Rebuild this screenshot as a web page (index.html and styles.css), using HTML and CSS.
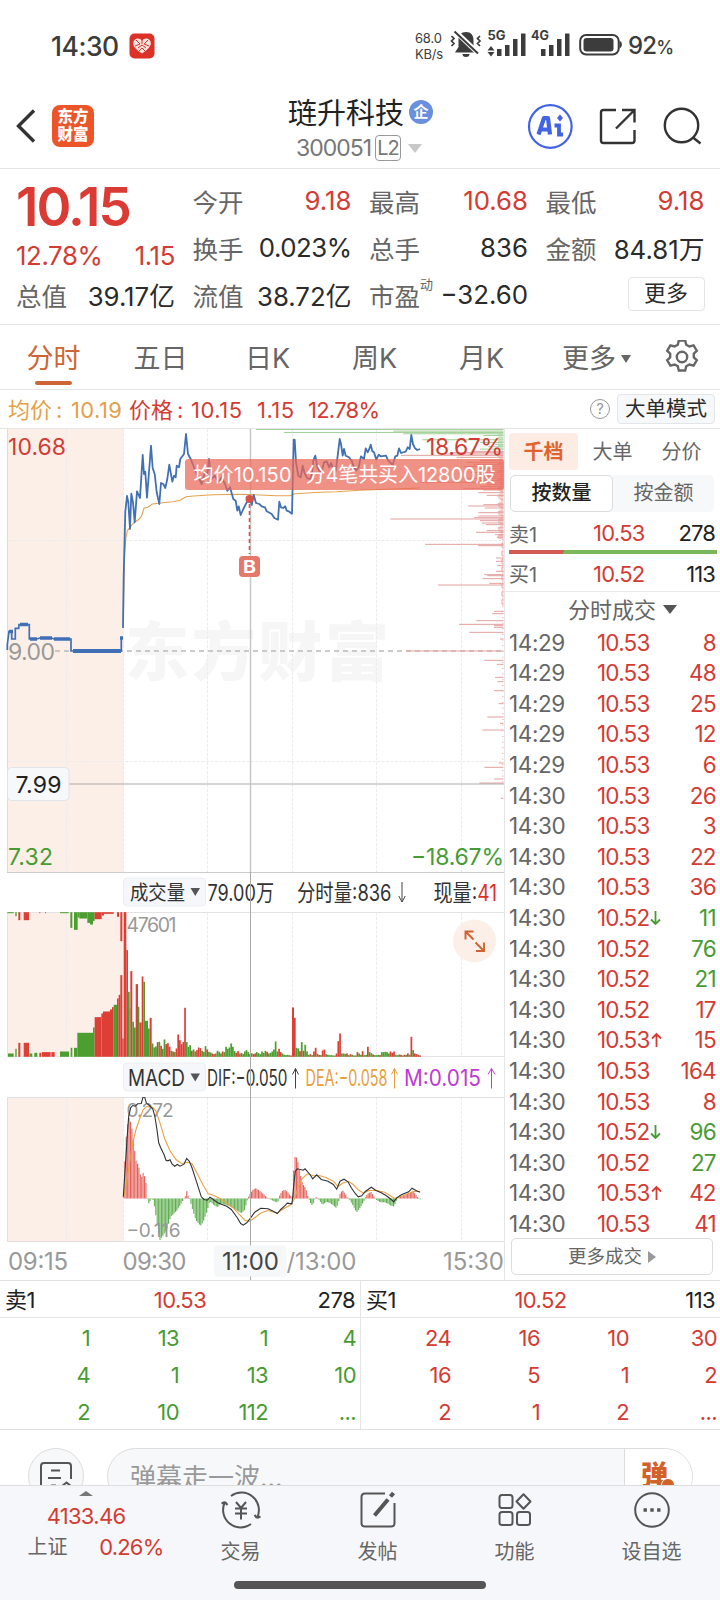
FILE: index.html
```html
<!DOCTYPE html>
<html lang="zh-CN">
<head>
<meta charset="utf-8">
<title>琏升科技 300051</title>
<link rel="stylesheet" href="styles.css">
</head>
<body>
<div class="status">
  <span class="clock">14:30</span>
  <svg class="app-badge" width="26" height="26" viewBox="0 0 26 26"><rect x=".5" y=".5" width="25" height="25" rx="5" fill="#dc3127"/><path d="M13 20.5C7 16.500 4 13.500 4.200 10c.3-5 6-6 8.800-2.500C15.800 4 21.500 5 21.800 10c.2 3.500-2.800 6.500-8.800 10.500Z" fill="#fbe4e0"/><path d="M7 7l4 4-5 2M19 7l-4 4 5 2M9 15l4-3 4 3M13 7v4M10 18l3-3 3 3" stroke="#dc3127" stroke-width="1" fill="none"/></svg>
  <span class="net">68.0<br>KB/s</span>
  <svg class="sys" width="180" height="36" viewBox="448 28 180 36" fill="#3c3c3c">
    <path d="M466 33c-5 0-7.500 3.500-7.500 8v7l-3.500 5.500h22l-3.500-5.500v-7c0-4.500-2.500-8-7.500-8Zm-3.500 22h7a3.500 3 0 0 1-7 0Z"/>
    <path d="M455 32l24 23" stroke="#fff" stroke-width="5"/><path d="M454.500 32.500l23.500 22" stroke="#3c3c3c" stroke-width="2"/>
    <path d="M451.500 37l2.500 2.500-2.500 2.500 2.500 2.500-2.500 2.500M480 37l-2.500 2.500 2.500 2.500-2.500 2.500 2.500 2.500" fill="none" stroke="#3c3c3c" stroke-width="1.700"/>
    <text x="487.500" y="41.200" font-size="12.500" font-weight="700" textLength="18" lengthAdjust="spacingAndGlyphs">5G</text>
    <text x="531" y="41.200" font-size="12.500" font-weight="700" textLength="18" lengthAdjust="spacingAndGlyphs">4G</text>
    <path d="M491 47l3.500 4.500h-7ZM491 57.500l3.500-4.500h-7Z"/>
    <path d="M497 50h4.500v7H497zM505 46h4.500v11H505zM513 40h4.500v17H513zM521 34.500h4.500V57H521zM541 50h4.500v7H541zM549 46h4.500v11H549zM557 40h4.500v17H557zM565 34.500h4.500V57H565z"/>
    <rect x="580.200" y="36" width="38.500" height="19.500" rx="6" fill="none" stroke="#3c3c3c" stroke-width="2"/><rect x="583.500" y="39" width="30" height="13.500" rx="3"/><path d="M619.500 41.500q2.500 1.500 2.500 4t-2.500 4Z"/>
  </svg>
  <span class="batt">92<small>%</small></span>
</div>

<header class="head">
  <svg width="20" height="36" viewBox="0 0 20 36"><path d="M18 2.500 2.500 18 18 33.500" fill="none" stroke="#333" stroke-width="3.400"/></svg>
  <div class="logo">东方<br>财富</div>
  <div class="name">
    <div class="name-row">琏升科技<i class="ent">企</i></div>
    <div class="code-row"><span>300051</span><b class="l2">L2</b><i class="tri-down pale"></i></div>
  </div>
  <svg class="acts" width="180" height="50" viewBox="524 101 180 50" fill="none" stroke="#333" stroke-width="2.400">
    <circle cx="550.300" cy="126.500" r="21.300" stroke="#4163e4" stroke-width="2.200"/>
    <path d="M538.500 134.500l5.500-16.500h4l2 16.500M541.500 129.500h8" stroke="#4163e4" stroke-width="4.200" stroke-linejoin="round"/>
    <path d="M554.500 125.500h4.500v9h4" stroke="#4163e4" stroke-width="3.800"/><path d="M560 114.500l3 3.500-3 3.500-3-3.500Z" fill="#4163e4" stroke="none"/>
    <path d="M616 110h-12.500q-2.500 0-2.500 2.500v28q0 2.500 2.500 2.500h28.500q2.500 0 2.500-2.500V130M622 110h12.500v12.500M634 110.500 616 128.500" />
    <circle cx="681.500" cy="125.500" r="16.700"/><path d="M693 137.500l7.500 6"/>
  </svg>
</header>

<section class="stats">
  <div class="big"><div class="price">10.15</div><div class="kv red"><span class="v">12.78%</span><span class="v">1.15</span></div></div>
  <div class="kv"><span>今开</span><span class="v red">9.18</span></div>
  <div class="kv"><span>最高</span><span class="v red">10.68</span></div>
  <div class="kv"><span>最低</span><span class="v red">9.18</span></div>
  <div class="kv"><span>换手</span><span class="v tight">0.023%</span></div>
  <div class="kv"><span>总手</span><span class="v">836</span></div>
  <div class="kv"><span>金额</span><span class="v">84.81万</span></div>
  <div class="kv"><span>总值</span><span class="v">39.17亿</span></div>
  <div class="kv"><span>流值</span><span class="v">38.72亿</span></div>
  <div class="kv"><span>市盈<sup>动</sup></span><span class="v">−32.60</span></div>
  <div class="more-btn">更多</div>
</section>

<nav class="tabs">
  <span class="tab on">分时</span><span class="tab">五日</span><span class="tab">日K</span><span class="tab">周K</span><span class="tab">月K</span><span class="tab last">更多<i class="tri-down small"></i></span>
  <svg width="34" height="34" viewBox="-17 -17 34 34" fill="none" stroke="#666" stroke-width="2.400"><circle r="5.200"/><path d="M-3.200-15h6.400l1 4.200 3.200 1.800 4.200-1.200 3.200 5.400-3 3v3.600l3 3-3.200 5.400-4.200-1.200-3.200 1.800-1 4.200h-6.400l-1-4.200-3.200-1.800-4.200 1.200-3.200-5.400 3-3v-3.600l-3-3 3.200-5.400 4.200 1.200 3.200-1.800Z" transform="translate(0 -1.500)"/></svg>
</nav>

<div class="info">
  <svg width="384" height="38" viewBox="0 390 384 38" font-size="22">
    <g class="c-or"><text x="8" y="418" textLength="44">均价</text><text x="56" y="418">:</text><text x="71" y="418" textLength="51">10.19</text></g>
    <g class="c-red"><text x="129" y="418" textLength="44">价格</text><text x="177" y="418">:</text><text x="191" y="418" textLength="51">10.15</text><text x="257" y="418" textLength="37">1.15</text><text x="308" y="418" textLength="72">12.78%</text></g>
  </svg>
  <span class="q">?</span><span class="mode">大单模式</span>
</div>

<main class="body">
  <div class="charts">
    <svg width="504" height="444" viewBox="0 430 504 444" id="price">
      <rect x="7.500" y="430" width="116" height="443" fill="#fcefe8"/>
      <text x="125" y="676" font-size="64" font-weight="900" fill="#f6f6f6" textLength="264">东方财富</text>
      <path d="M66.500 430v443M123.500 430v443M207.500 430v443M292.500 430v443M376.500 430v443M461.500 430v443M8 541.500h496M8 762.500h496" stroke="#eeebea" stroke-dasharray="3 1.500" fill="none"/>
      <path d="M7.500 430v444" stroke="#ddd"/><path d="M7 873.500h497" stroke="#ccc"/>
      <path d="M55 652h449" stroke="#bbb" stroke-width="1.500" stroke-dasharray="5 4"/>
      <g id="depth"></g>
      <polyline id="avg" fill="none" stroke="#e5a24d" stroke-width="1.100"/>
      <polyline id="pre" fill="none" stroke="#3f6fb5" stroke-width="1.700"/>
      <path d="M73 652h48" stroke="#3f6fb5" stroke-width="4"/><path d="M20 625.500h8M30 640h7M40 639h12M54 640h16M9 632.500h4M120 639h3" stroke="#3f6fb5" stroke-width="3.500"/>
      <polyline id="line" fill="none" stroke="#4170b5" stroke-width="1.800" stroke-linejoin="round"/>
      <path d="M250.500 430v444M69 785h435" stroke="#999" stroke-opacity=".55" stroke-width="1.500" fill="none"/>
      <circle cx="249.500" cy="500" r="4" fill="#d75246"/>
      <path d="M249.500 505v50" stroke="#d75246" stroke-width="1.600" stroke-dasharray="4 3"/>
      <rect x="239" y="557" width="21" height="21" rx="4" fill="#e5776b"/><text x="243" y="573.500" font-size="17" font-weight="700" fill="#fff" textLength="13" lengthAdjust="spacingAndGlyphs">B</text>
      <g font-size="23"><text class="c-red" x="8" y="455.500" textLength="58">10.68</text><text class="c-red" x="426" y="455.500" textLength="77">18.67%</text>
      <text x="8" y="661" fill="#999" textLength="47">9.00</text>
      <text class="c-gr" x="8" y="866" textLength="45">7.32</text><text class="c-gr" x="411" y="866" textLength="93">−18.67%</text></g>
      <rect x="185" y="460" width="319" height="31" rx="3" fill="#ea6658" fill-opacity=".72"/>
      <g font-size="20" fill="#fff"><text x="193.500" y="483" textLength="98">均价10.150</text><text x="305.500" y="483" textLength="190">分4笔共买入12800股</text></g>
      <rect x="7.500" y="768.500" width="61.500" height="33" rx="4" fill="#f6f8fa" stroke="#e1e5e8"/><text x="15.500" y="794" font-size="23" fill="#222" textLength="46">7.99</text>
    </svg>
    <svg width="504" height="39" viewBox="0 874 504 39" font-size="20" fill="#333">
      <rect x="123.500" y="879" width="82" height="28" rx="4" fill="#f6f7fa" stroke="#eceef1"/>
      <text x="130" y="900.500" textLength="55" lengthAdjust="spacingAndGlyphs">成交量</text><path d="M190.500 889h9.500l-4.750 8Z" fill="#555"/>
      <g font-size="22.500"><text x="207.500" y="901.500" textLength="66.500" lengthAdjust="spacingAndGlyphs">79.00万</text>
      <text x="297" y="901.500" textLength="94.500" lengthAdjust="spacingAndGlyphs">分时量:836</text>
      <text x="433.500" y="901.500" textLength="63.500" lengthAdjust="spacingAndGlyphs">现量:<tspan fill="#dd3128">41</tspan></text></g>
      <path d="M402 883v20l-3.200-6M402 903l3.200-6" fill="none" stroke="#444"/><path d="M250.500 874v39" stroke="#aaa"/>
    </svg>
    <svg width="504" height="145" viewBox="0 912.500 504 145">
      <rect x="7.500" y="912.500" width="116" height="145" fill="#fcefe8"/>
      <path d="M66.500 913v144M207.500 913v144M292.500 913v144M376.500 913v144M461.500 913v144" stroke="#eeebea" stroke-dasharray="3 1.500"/>
      <path d="M7 913h497M7 1057h497M7.500 913v144" stroke="#e3e3e3" fill="none"/>
      <g id="vol"></g><path d="M250.500 912v146" stroke="#aaa"/>
      <text x="126.500" y="932.500" font-size="19.500" fill="#999" textLength="50">47601</text>
      <circle cx="474.500" cy="941.500" r="21.500" fill="#fbefe8"/>
      <path d="M465.500 940v-8h8M465.500 932l8 8M484 943v8.500h-8M484 951.500l-8.500-8.500" fill="none" stroke="#d26330" stroke-width="1.900"/>
    </svg>
    <svg width="504" height="40" viewBox="0 1057.500 504 40" font-size="22.500" fill="#333">
      <rect x="123.500" y="1063.500" width="82" height="28" rx="4" fill="#f6f7fa" stroke="#eceef1"/>
      <text x="128" y="1086" textLength="57" lengthAdjust="spacingAndGlyphs">MACD</text><path d="M190.500 1074h9.500l-4.750 8Z" fill="#555"/>
      <text x="207" y="1086" textLength="80.500" lengthAdjust="spacingAndGlyphs">DIF:−0.050</text>
      <text x="305.500" y="1086" fill="#e5a03f" textLength="82" lengthAdjust="spacingAndGlyphs">DEA:−0.058</text>
      <text x="404" y="1086" fill="#c03bd2" textLength="77" lengthAdjust="spacingAndGlyphs">M:0.015</text>
      <g fill="none"><path d="M295.500 1089v-20l-3 6M295.500 1069l3 6" stroke="#444"/><path d="M394.500 1089v-20l-3 6M394.500 1069l3 6" stroke="#e5a03f"/><path d="M491.500 1089v-20l-3.500 6M491.500 1069l3.500 6" stroke="#c03bd2"/></g><path d="M250.500 1057v41" stroke="#aaa"/>
    </svg>
    <svg width="504" height="145" viewBox="0 1097.500 504 145">
      <rect x="7.500" y="1097.500" width="116" height="145" fill="#fcefe8"/>
      <path d="M66.500 1098v144M123.500 1098v144M207.500 1098v144M292.500 1098v144M376.500 1098v144M461.500 1098v144" stroke="#eeebea" stroke-dasharray="3 1.500"/>
      <path d="M7 1098h497M7 1242h497M7.500 1098v144" stroke="#e0e0e0" fill="none"/>
      <g id="macd"></g>
      <g font-size="19" fill="#999"><text x="126.500" y="1117" textLength="47">0.272</text><text x="126.500" y="1237" textLength="54">−0.116</text></g>
      <polyline id="dea" fill="none" stroke="#eaa044" stroke-width="1.100"/><polyline id="dif" fill="none" stroke="#333" stroke-width="1.100"/>
      <path d="M250.500 1097v146" stroke="#aaa"/>
    </svg>
    <svg width="504" height="38" viewBox="0 1242.500 504 38" font-size="24" fill="#999">
      <rect x="214" y="1246" width="72.500" height="31.500" rx="4" fill="#f5f7f9"/><path d="M250.500 1242v4M250.500 1277v4" stroke="#aaa"/>
      <text x="8" y="1270.500" textLength="60">09:15</text><text x="122.500" y="1270.500" textLength="64">09:30</text>
      <text x="222" y="1270.500" fill="#444" textLength="57">11:00</text><text x="286.500" y="1270.500" textLength="70">/13:00</text><text x="443" y="1270.500" textLength="61">15:30</text>
    </svg>
  </div>

  <aside class="side">
    <div class="side-tabs"><span class="on">千档</span><span>大单</span><span>分价</span></div>
    <div class="seg"><span class="on">按数量</span><span>按金额</span></div>
    <div class="quote"><span>卖1</span><span class="p">10.53</span><span class="n">278</span></div>
    <div class="ratio"></div>
    <div class="quote buy"><span>买1</span><span class="p">10.52</span><span class="n">113</span></div>
    <div class="side-title">分时成交<i class="tri-down dark"></i></div>
    <div class="trades" id="trades"></div>
    <div class="side-more">更多成交<i class="tri-right"></i></div>
  </aside>
</main>

<section class="queues">
  <div class="queue"><div class="q-head"><span>卖1</span><span class="red">10.53</span><span>278</span></div>
    <div class="q-grid green"><span>1</span><span>13</span><span>1</span><span>4</span><span>4</span><span>1</span><span>13</span><span>10</span><span>2</span><span>10</span><span>112</span><span>...</span></div></div>
  <div class="queue"><div class="q-head"><span>买1</span><span class="red">10.52</span><span>113</span></div>
    <div class="q-grid red"><span>24</span><span>16</span><span>10</span><span>30</span><span>16</span><span>5</span><span>1</span><span>2</span><span>2</span><span>1</span><span>2</span><span>...</span></div></div>
</section>

<section class="chat">
  <div class="round"><svg width="38" height="38" viewBox="0 0 38 38" fill="none" stroke="#555" stroke-width="2"><path d="M13 34H7q-3 0-3-3V7q0-3 3-3h24q3 0 3 3v13M14 11.500h9M11 19h13M14 26.500h5"/><path d="M23 31l1.500-3.500 5-4 5 4 1.500 3.500"/><circle cx="29.500" cy="29.500" r="1.500"/></svg></div>
  <div class="input"><span>弹幕走一波...</span><b>弹<i></i></b></div>
</section>

<footer class="nav">
  <div class="index"><i class="tri-up"></i><div class="red idx">4133.46</div><div class="idx-row"><span>上证</span><span class="red">0.26%</span></div></div>
  <div class="item"><svg width="42" height="40" viewBox="-21 -20 42 40"><path d="M-10-14A17.500 17.500 0 0 1 16 8M16 8l3.500-1.500M16 8l-2.500-3M10 14A17.500 17.500 0 0 1-16-8M-16-8l-3.500 1.500M-16-8l2.500 3M-5-8l5 6 5-6M0-2V9.500M-6-1.500H6M-6 3.500H6"/></svg><span>交易</span></div>
  <div class="item"><svg width="42" height="40" viewBox="-21 -20 42 40"><path d="M7-16.500h-20q-3.500 0-3.500 3.500v26q0 3.500 3.500 3.500h26q3.500 0 3.500-3.500V-7"/><path d="M-3.500 5.500 10-10.500M12.500-13.500l3-3.500" stroke-width="4"/></svg><span>发帖</span></div>
  <div class="item"><svg width="42" height="40" viewBox="-21 -20 42 40"><rect x="-15.500" y="-15" width="13" height="13" rx="2.500"/><rect x="-15.500" y="2" width="13" height="13" rx="2.500"/><rect x="2" y="2" width="13" height="13" rx="2.500"/><path d="M8.500-15.800l7 7.300-7 7.300-7-7.300Z" stroke-linejoin="round"/></svg><span>功能</span></div>
  <div class="item"><svg width="42" height="40" viewBox="-21 -20 42 40"><circle r="16.800"/><path d="M-8.500 0h3.400M-1.700 0h3.400M5.100 0h3.400" stroke-width="3.400"/></svg><span>设自选</span></div>
  <div class="home"></div>
</footer>
<script src="chart.js"></script>
</body>
</html>
```
FILE: styles.css
```css
* { box-sizing: border-box; }
body { margin: 0; width: 720px; height: 1600px; overflow: hidden; background: #fff; color: #2b2b2b; font-family: Inter, "Noto Sans CJK SC", sans-serif; font-weight: 400; display: flex; flex-direction: column; }
svg { display: block; flex: none; }
i { font-style: normal; }
.red { color: #d33c33; }
.green { color: #479b33; }
.c-red { fill: #d33c33; }
.c-gr { fill: #479b33; }
.c-or { fill: #e5a04a; }

.status { height: 84px; padding: 8px 0 0 51px; display: flex; align-items: center; color: #3c3c3c; }
.clock { width: 78px; font-size: 26.500px; font-weight: 500; letter-spacing: -.5px; }
.net { margin-left: 260px; width: 33px; font-size: 13px; line-height: 16px; letter-spacing: -.2px; }
.sys { margin-top: -1px; }
.batt { font-size: 24px; font-weight: 500; letter-spacing: -.8px; }
.batt small { font-size: 18px; letter-spacing: 0; }

.head { height: 85px; border-bottom: 1px solid #e5e5e5; padding-left: 16px; display: flex; align-items: center; }
.logo { width: 42px; height: 42px; margin: 1px 0 0 16px; border-radius: 8px; background: #ec5529; color: #fff; font-size: 15.500px; line-height: 17.500px; font-weight: 900; text-align: center; padding-top: 3px; }
.name { flex: 1; padding: 7px 0 0 194px; }
.name-row { display: flex; align-items: center; font-size: 29px; line-height: 38px; height: 38px; color: #222; white-space: nowrap; }
.ent { width: 24px; height: 24px; border-radius: 50%; background: #6a8fdd; color: #fff; font-size: 15px; line-height: 23px; font-weight: 700; text-align: center; margin: -4px 0 0 5px; }
.code-row { display: flex; align-items: center; height: 31px; padding-left: 8px; font-size: 23px; color: #777; }
.code-row span { width: 79px; letter-spacing: -1px; }
.l2 { height: 26px; width: 26px; border: 1px solid #999; border-radius: 4px; font-weight: 400; font-size: 20px; line-height: 24px; letter-spacing: -1px; text-align: center; margin-right: 7px; }
.acts { margin-right: 16px; }
.tri-down { display: inline-block; border: solid transparent; border-width: 9px 7px 0; border-top-color: #c8c8c8; }
.tri-down.small { border-width: 8px 5px 0; border-top-color: #666; }
.tri-down.dark { border-width: 9px 7px 0; border-top-color: #555; }
.tri-right { display: inline-block; border: solid transparent; border-width: 6px 0 6px 8px; border-left-color: #999; }

.stats { height: 157px; border-bottom: 1px solid #e5e5e5; padding: 8px 16px 0; display: grid; grid-template-columns: 159px 159px 159px 159px; column-gap: 17.500px; grid-template-rows: 47px 47px 47px; align-items: center; justify-content: start; }
.big { grid-row: 1 / 3; height: 94px; }
.price { height: 61px; line-height: 61px; font-size: 53px; font-weight: 600; color: #da3b35; letter-spacing: -2px; }
.kv { display: flex; justify-content: space-between; align-items: center; font-size: 25.500px; height: 36px; white-space: nowrap; color: #666; }
.kv.red, .kv .red { color: #d33c33; }
.v { font-size: 25.800px; color: #2b2b2b; letter-spacing: 0; }
.v.tight { letter-spacing: -.5px; }
.kv.red .v { color: #d33c33; letter-spacing: -.4px; }
.kv sup { font-size: 13px; line-height: 0; vertical-align: 17px; }
.more-btn { justify-self: end; margin-right: 0; width: 77px; height: 34px; border: 1px solid #e4e4e4; border-radius: 4px; text-align: center; font-size: 22px; line-height: 31px; }

.tabs { height: 65px; border-bottom: 1px solid #e5e5e5; display: flex; align-items: center; color: #666; font-size: 27px; }
.tab { width: 107px; height: 64px; line-height: 67px; text-align: center; }
.tab.on { color: #cd6534; display: flex; flex-direction: column; align-items: center; }
.tab.on::after { content: ""; width: 37px; height: 4px; border-radius: 2px; background: #cd6534; margin-top: -11px; }
.tab.last { width: 130px; padding-right: 7px; white-space: nowrap; }
.tab.last i { margin-left: 5px; vertical-align: 5px; }
.info { height: 39px; border-bottom: 1px solid #e5e5e5; display: flex; align-items: center; }
.q { margin-left: 206px; width: 20px; height: 20px; border: 1.500px solid #999; border-radius: 50%; color: #999; font-size: 15px; line-height: 17px; text-align: center; }
.mode { margin-left: 7px; width: 98px; height: 30px; background: #f7f8fa; border: 1px solid #e3e5e8; border-radius: 4px; font-size: 20.500px; line-height: 28px; text-align: center; }

.body { height: 852px; display: flex; border-bottom: 1px solid #e0e0e0; }
.charts { width: 504px; }
.side { width: 216px; border-left: 1px solid #e5e5e5; padding-left: 4px; }
.side-tabs { display: flex; padding-top: 4px; height: 41px; color: #666; font-size: 20px; }
.side-tabs span { width: 69px; height: 37px; line-height: 38px; text-align: center; border-radius: 4px; }
.side-tabs .on { background: #fdece4; color: #e2622d; font-weight: 700; }
.seg { margin: 5px 0 0 1px; width: 204px; height: 37px; display: flex; background: #f7f8fa; border-radius: 5px; font-size: 20px; line-height: 37px; color: #666; text-align: center; }
.seg span { flex: 1; }
.seg .on { background: #fff; border: 1px solid #ddd; border-radius: 5px; color: #222; font-weight: 500; line-height: 35px; }
.quote { display: flex; align-items: center; height: 38px; padding: 4px 5px 0 0; font-size: 20px; color: #666; }
.quote span:first-child { width: 84px; }
.quote .p { font-size: 22px; color: #d33c33; letter-spacing: -.7px; }
.quote .n { margin-left: auto; font-size: 22px; color: #222; letter-spacing: -.9px; }
.ratio { width: 208px; height: 4px; background: linear-gradient(120deg, #d55a54 26.500%, #7ab85c 26.500%); }
.quote.buy { height: 38px; padding-top: 2px; border-bottom: 1px solid #e8e8e8; margin: 0 0 0 -4px; padding-left: 4px; }
.side-title { height: 35px; line-height: 37px; padding-left: 59px; font-size: 22px; color: #666; white-space: nowrap; }
.side-title i { margin-left: 7px; vertical-align: 4px; }
.trade { height: 30.600px; line-height: 32px; display: flex; align-items: center; font-size: 22.500px; padding-right: 5px; letter-spacing: -.8px; }
.trade .t { width: 88px; color: #666; letter-spacing: -.4px; }
.trade svg { margin-left: 1px; }
.trade .n { margin-left: auto; margin-right: -.8px; }
.side-more { margin: -1px 0 0 2px; width: 202px; height: 37px; border: 1px solid #ddd; border-radius: 5px; text-align: center; font-size: 18.500px; line-height: 35px; color: #666; }
.side-more i { margin-left: 6px; }

.queues { height: 149px; display: flex; border-bottom: 1px solid #e0e0e0; font-size: 22px; letter-spacing: -.6px; }
.queue { width: 360px; }
.queue + .queue { border-left: 1px solid #e5e5e5; }
.q-head { height: 37px; border-bottom: 1px solid #e5e5e5; display: grid; grid-template-columns: 1fr 1fr 1fr; align-items: center; padding: 2px 5px 0 5px; color: #222; line-height: 34px; }
.q-head span:nth-child(2) { text-align: center; }
.q-head span:nth-child(3) { text-align: right; }
.q-grid { display: grid; grid-template-columns: 90px 89px 89px 88px; grid-auto-rows: 37px; line-height: 40px; text-align: right; }

.chat { height: 55px; padding: 18px 27px 0 28px; display: flex; overflow: hidden; }
.round { flex: none; width: 56px; height: 56px; border: 1px solid #ddd; border-radius: 50%; background: #f7f8fa; display: flex; justify-content: center; padding-top: 10px; }
.input { flex: none; margin-left: 23px; width: 586px; height: 57px; border: 1px solid #ddd; border-radius: 29px; background: #f7f8fa; display: flex; overflow: hidden; line-height: 58px; font-size: 26px; color: #999; padding-left: 22px; }
.input span { flex: 1; }
.input b { width: 68px; background: #fff; border-left: 1px solid #ddd; color: #d2622a; font-weight: 900; font-size: 27px; line-height: 53px; padding-left: 16px; position: relative; }
.input b i { position: absolute; left: 36px; top: 29px; width: 14px; height: 14px; border-radius: 50%; background: #d2622a; border: 1px solid #fff; }

.nav { height: 115px; background: #f6f7fa; border-top: 1px solid #dedede; display: flex; position: relative; color: #666; }
.index { width: 172px; display: flex; flex-direction: column; align-items: center; padding-top: 5px; }
.tri-up { border: solid transparent; border-width: 0 7px 5px; border-bottom-color: #777; }
.idx { height: 34px; line-height: 41px; font-size: 22px; letter-spacing: -.7px; }
.idx-row { display: flex; width: 136px; justify-content: space-between; font-size: 20px; line-height: 34px; margin-left: 19px; }
.idx-row .red { font-size: 22px; letter-spacing: -.8px; }
.item { width: 137px; display: flex; flex-direction: column; align-items: center; padding-top: 4px; font-size: 20px; line-height: 40px; }
.item svg { fill: none; stroke: #555; stroke-width: 2; }
.item span { margin-top: 2px; }
.home { position: absolute; left: 234px; top: 95px; width: 252px; height: 8px; border-radius: 4px; background: #555; }
```
FILE: chart.js
```js
const el = id => document.getElementById(id);
// Series are stored at three units per pixel, with an origin for each panel.
const plot = (id, ox, oy, data) => el(id).setAttribute('points',
  data.trim().split(/\s+/).map(p => { const [x, y] = p.split(',').map(Number); return (x / 3 + ox).toFixed(1) + ',' + (y / 3 + oy).toFixed(1); }).join(' '));
const rect = (x, y, w, h, fill) => `<rect x="${x.toFixed(2)}" y="${y.toFixed(2)}" width="${w.toFixed(2)}" height="${h.toFixed(2)}" fill="${fill}"/>`;
const RED = '#dd3f36', GREEN = '#4c9e30';

plot('pre', 0, 420, '22,693 22,677 27,637 35,637 35,660 46,660 46,628 56,628 57,617 88,617 88,660 110,660 120,657 155,657 162,660 213,660 213,696 364,696 364,657');
plot('line', 0, 420, `369,627 371,470 374,350 376,278 381,231 385,250 390,330 394,224 399,250 404,310 411,217 420,237 428,108 432,165 436,158 441,236 453,80 458,148 464,165 470,220 478,255 483,192 490,195 496,207 502,180 508,137 517,188 522,170 527,175 530,140 537,145 541,120 552,105 558,45 564,105 572,120 590,165 605,195 615,160 622,165 627,120 634,180 645,170 655,190 665,175 675,195 682,215 690,205 700,240 707,245 712,275 716,262 722,288 730,270 740,250 748,240
755,258 761,228 768,252 778,255 785,262 795,265 800,277 815,285 823,297 834,302 838,248 843,265 850,267 856,262 860,275 868,278 876,284 881,62 884,62 888,130 895,170 902,175 908,140 913,160 922,178 930,180 936,165 940,125 946,110 952,145 960,160 967,150 972,130 980,127 988,145 993,132 1000,150 1007,155 1013,110 1019,60 1023,75 1028,110 1032,90 1037,110 1047,115 1055,125 1060,140 1068,155 1076,145 1083,112 1092,120 1097,88 1103,100 1107,92 1112,77 1117,97 1122,100 1129,122 1136,107 1142,112 1158,110 1163,122 1170,130 1178,138 1186,112 1192,110 1197,88 1203,102 1217,98 1223,85 1229,90 1234,48 1239,75 1245,88 1252,93 1260,90`);
plot('avg', 0, 420, '370,600 373,420 377,360 382,335 390,325 398,315 406,308 415,302 424,293 432,268 445,264 457,255 478,253 500,250 520,248 540,244 558,233 580,231 640,227 720,226 780,228 830,230 870,230 884,224 960,220 1010,218 1080,214 1160,211 1260,207');
plot('dif', 0, 900, `370,892 376,800 381,720 386,650 392,625 398,618 406,620 413,613 424,612 429,593 434,593 439,610 448,618 458,628 464,648 470,685 476,730 482,745 492,765 498,782 504,784 510,781 516,793 524,800 532,795 540,800 552,794 560,777 568,785 576,805 588,842 604,892 612,900 622,902 630,893 640,900 652,909 664,914 680,920 694,930 712,955 722,972 730,977 740,970 752,955 764,938 782,926 804,928 820,935 832,942 842,930 854,919 862,911 876,913 882,850 886,815 892,808 910,812 915,808 930,825 938,838 950,826 964,840 984,845 1000,855 1010,869 1020,845 1032,839 1044,847 1054,865 1065,881 1075,892 1085,889 1096,876 1114,863 1128,873 1144,880 1158,888 1174,900 1181,907 1190,895 1204,886 1226,877 1236,866 1248,873 1260,878`);
plot('dea', 0, 900, `370,895 378,860 386,808 398,730 408,690 420,655 430,630 440,621 458,623 468,635 480,670 494,718 510,754 528,780 545,792 565,788 576,793 592,823 610,858 625,883 640,887 660,897 680,910 700,925 718,945 735,963 750,965 764,955 784,940 804,933 832,941 852,927 872,916 886,893 894,863 906,838 922,823 940,829 960,829 980,835 1000,845 1014,861 1030,850 1046,846 1060,855 1075,871 1090,881 1108,873 1130,873 1154,878 1170,888 1183,897 1200,892 1220,884 1240,876 1260,876`);

// Price distribution on the right edge: [y, left] pairs.
const dist = [[97,665],[101,600],[105,575],[109,453],[115,620],[124,690],[130,650],[136,670],[142,640],[148,690],[154,700],[160,660],[166,680],[172,700],[178,640],[184,690],[190,510],[196,710],[202,690],[208,640],[213,700],[221,685],[229,710],[257,700],[261,655],[267,705],[281,685],[291,685],[296,672],[300,421],[305,690],[312,695],[317,708],[335,710],[340,678],[347,735],[355,740],[376,525],[380,684],[417,738],[427,738],[440,742],[457,738],[467,703],[470,712],[479,698],[493,718],[498,564],[577,732],[584,726],[605,679],[616,627],[620,732],[625,732],[640,658],[660,750],[696,468],[724,703],[736,740],[775,735],[788,742],[815,732],[854,746],[894,712],[913,750],[933,697],[1032,746],[1045,703],[1080,732],[1092,688],[1138,753]];
let d = '';
[[31,18],[36,430],[40,102],[44,460],[49,700],[62,517],[70,690],[76,735],[83,715],[90,690]].forEach(([y, x]) => d += rect(x / 3 + 250, y / 3 + 419.6, 253.5 - x / 3, 1, '#9fce95'));
for (let y = 46; y < 94; y += 4) d += rect(498, y / 3 + 420, 5.5, .8, '#abd6a3');
for (let y = 96; y < 560; y += 4) { const w = (y < 360 ? 6 : 2.5) * (.35 + .65 * Math.abs(Math.sin(y * 1.7))); d += rect(503.5 - w, y / 3 + 420, w, .9, '#ebaaa6'); }
for (let y = 560; y < 1100; y += 17) d += rect(502, y / 3 + 420, 1.5, .8, '#ebaaa6');
dist.forEach(([y, x]) => d += rect(x / 3 + 250, y / 3 + 419.5, 253.5 - x / 3, 1, '#e3a19f'));
el('depth').innerHTML = d;

// Volume: [x0, x1, height, up] on a baseline at 1057.
const V = [[24,41,10,0],[46,50,24,0],[55,61,42,1],[71,87,42,1],[88,97,10,0],[103,112,12,0],[118,124,12,1],[126,152,14,1],[154,164,14,1],[180,207,16,0],[212,217,27,0],[222,232,27,0],[232,279,72,0],[279,284,88,0],[284,304,119,1],[304,309,130,1],[309,330,136,1],[330,336,142,1],[336,341,149,1],[341,351,156,0],[351,356,175,1],[356,361,186,1],[361,367,245,1],[367,371,55,1],[371,379,434,1],[379,384,320,1],[384,389,195,0],[389,391,145,0],[391,397,257,1],[397,402,105,0],[402,407,88,0],[407,414,218,1],[414,418,150,0],[418,425,103,1],[425,430,241,1],[430,435,225,0],[435,444,108,0],[444,449,85,0],[449,455,117,1]];
const series = (x0, step, text) => text.split(' ').forEach((s, i) => V.push([x0 + i * step, x0 + (i + 1) * step, parseInt(s), s.endsWith('r') ? 1 : 0]));
series(455, 5.13, '40g 28g 31g 44r 45g 33r 24g 52g 38r 41r 30r 18g 16r 14g 25r 67r 50r 38r 44r 147r 44g 30g 35g 18r 22g 16g 20r 28r 26r 18g 15g 32g 22r 15g 13g 10r 8r 10g 18g 15g 10g 16r 14g 30g 24g 28g 40g 30g 17g 12r 17r 10g 11r 8g 16g 20g 14g 8r 11g 8r 10r 14g 11g 8g 16g 12g 18g 15r 10g 12g 16g 22g 46g 16g 24r 14r 10g 6g 5g 6g 5g 4r');
V.push([876, 882, 148, 1], [882, 887, 117, 1]);
series(887, 5.22, '27g 25g 17r 44g 18r 36g 16g 6g 8r 5g 16r 27r 9g 6r 5g 19r 22r 8g 6g 5g 5g 4g 4g 10r 47r 70r 10g 10g 9g 10r 5g 8r 6g 4g 4g 14r 10g 6g 17r 5g 6g 30r 14g 11g 7r 5g 5g 6g 5r 14g 14g 15g 14g 10g 16r 12r 16r 6g 5g 7g 6r 4g 6r 6g 10r 6g 60r 20g 10r 8r 6r 4r');
const hanging = [[22,41,3,0],[46,50,12,0],[55,61,24,1],[71,87,24,1],[118,121,3,1],[135,138,3,1],[180,206,3,0],[211,217,47,0],[222,233,53,0],[233,238,16,0],[238,262,19,0],[262,270,32,0],[270,279,37,0],[279,284,26,0],[284,305,21,1],[305,312,10,1],[312,341,5,1],[351,357,14,1],[361,367,87,1]];
let v = '';
V.forEach(([a, b, h, up]) => v += rect(a / 3, 1057.3 - h / 3, (b - a) / 3, h / 3, up ? RED : GREEN));
hanging.forEach(([a, b, h, up]) => v += rect(a / 3, 912.7, (b - a) / 3, h / 3, up ? RED : GREEN));
el('vol').innerHTML = v;

// MACD histogram: one bar for each minute after the open, interpolated between knots.
const knots = [[372,-90],[376,-175],[384,-245],[392,-225],[398,-180],[406,-115],[414,-98],[422,-60],[429,-80],[436,-50],[440,-2],[446,18],[452,-3],[458,5],[463,30],[470,80],[478,125],[488,110],[498,95],[510,55],[520,45],[530,35],[542,15],[550,0],[554,-5],[559,-23],[564,-4],[568,3],[575,30],[586,65],[600,82],[608,70],[618,42],[628,8],[638,18],[650,26],[662,15],[680,20],[700,30],[722,44],[732,35],[740,6],[746,-10],[755,-24],[764,-31],[775,-25],[790,-12],[800,-2],[810,3],[820,8],[832,12],[838,-12],[846,-23],[854,-26],[862,-18],[870,-8],[876,-4],[879,-80],[884,-128],[890,-120],[897,-82],[906,-45],[916,-30],[922,-6],[930,14],[936,22],[942,3],[948,-6],[954,2],[966,19],[978,10],[990,14],[1008,29],[1015,6],[1019,-16],[1026,-25],[1034,-14],[1042,0],[1048,5],[1058,22],[1068,42],[1080,26],[1090,8],[1096,-8],[1104,-16],[1112,-20],[1120,-6],[1126,3],[1138,11],[1156,12],[1172,22],[1180,24],[1188,6],[1196,-4],[1210,-8],[1224,-15],[1238,-22],[1248,-8],[1256,2],[1262,3]];
let m = '', k = 0;
for (let x = 373; x < 1262; x += 4.22) {
  while (k < knots.length - 2 && knots[k + 1][0] < x) k++;
  const [x0, y0] = knots[k], [x1, y1] = knots[k + 1];
  const h = y0 + (y1 - y0) * (x - x0) / (x1 - x0), up = h < 0;
  m += rect(x / 3, (897 + Math.min(h, 0)) / 3 + 900, 1.05, Math.max(Math.abs(h) / 3, .4), up ? '#e5605a' : '#5fad50');
  m += rect(x / 3 + 1.05, (897 + Math.min(h, 0)) / 3 + 900, .36, Math.max(Math.abs(h) / 3, .4), up ? '#f2aaa5' : '#a5d49b');
}
el('macd').innerHTML = m;

const trades = ['29 53 8','29 53 48','29 53 25','29 53 12','29 53 6','30 53 26','30 53 3','30 53 22','30 53 36','30 52 11 d','30 52 76 g','30 52 21 g','30 52 17','30 53 15 u','30 53 164','30 53 8','30 52 96 d','30 52 27 g','30 53 42 u','30 53 41'];
el('trades').innerHTML = trades.map(s => {
  const [t, p, n, f] = s.split(' ');
  const arrow = f === 'u' || f === 'd' ? `<svg width="11" height="16" viewBox="0 0 11 16"><path d="${f === 'u' ? 'M5.500 15V2M1 6.500 5.500 2 10 6.500' : 'M5.500 1v13M1 9.500l4.500 4.500L10 9.500'}" fill="none" stroke="${f === 'u' ? '#d33c33' : '#479b33'}" stroke-width="1.800"/></svg>` : '';
  return `<div class="trade"><span class="t">14:${t}</span><span class="red">10.${p}</span>${arrow}<span class="n ${f === 'g' || f === 'd' ? 'green' : 'red'}">${n}</span></div>`;
}).join('');
```
